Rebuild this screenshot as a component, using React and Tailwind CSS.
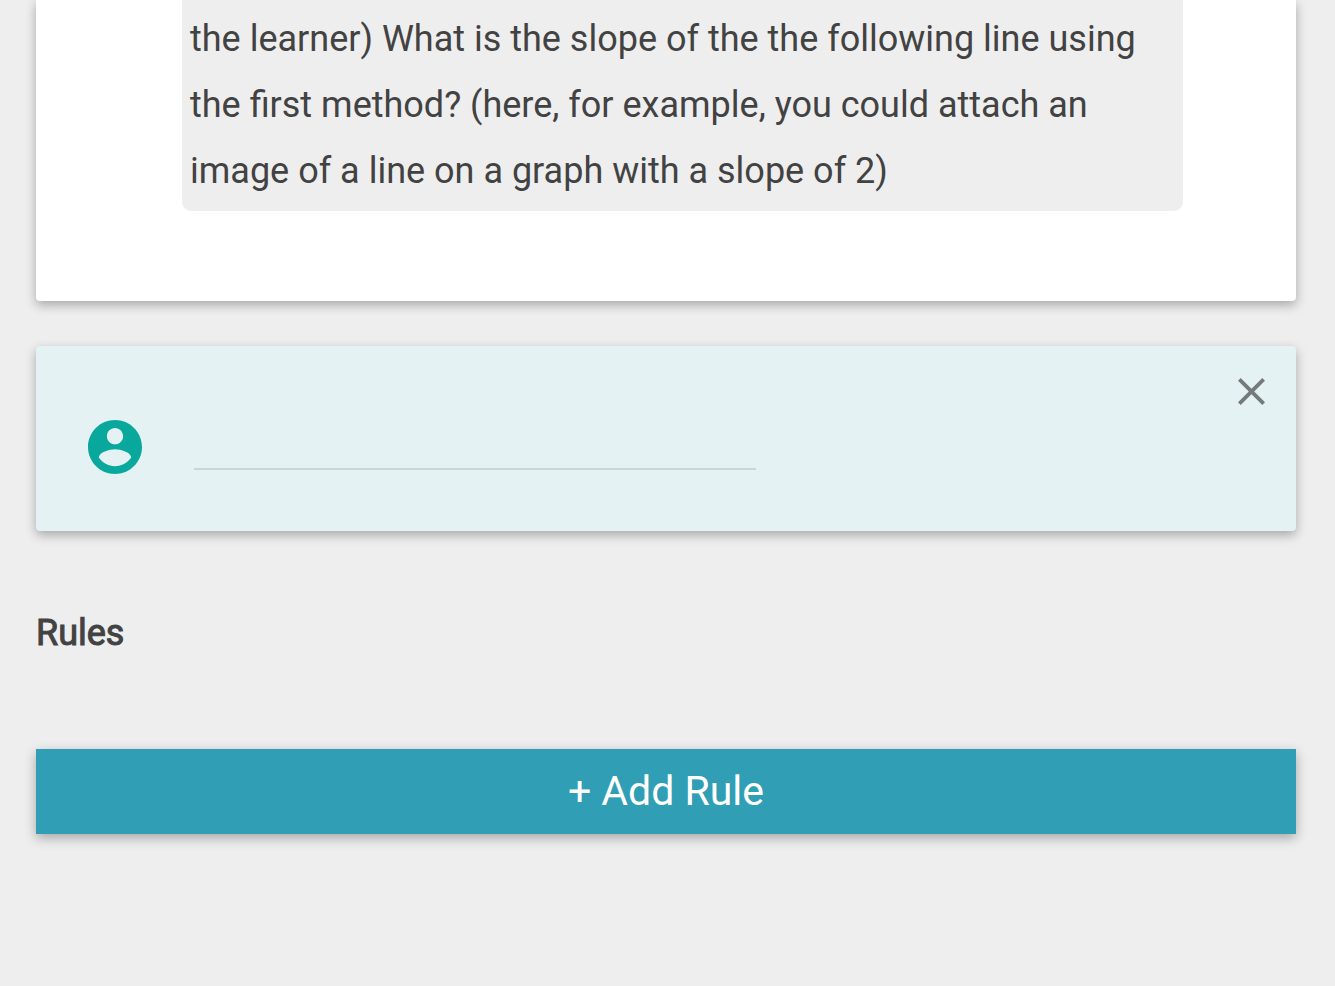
const cardShadow = 'shadow-[0_4px_11px_rgba(0,0,0,0.3)]';

function UserIcon() {
  return (
    <svg viewBox="2 2 20 20" className="size-[54px] shrink-0 fill-[#09a89c]" aria-hidden="true">
      <path d="M12 2C6.48 2 2 6.48 2 12s4.48 10 10 10 10-4.48 10-10S17.52 2 12 2zm0 3c1.66 0 3 1.34 3 3s-1.34 3-3 3-3-1.34-3-3 1.34-3 3-3zm0 14.1c-2.5 0-4.71-1.28-6-3.2.03-1.99 4-3.08 6-3.08 1.99 0 5.97 1.09 6 3.08-1.29 1.92-3.5 3.2-6 3.2z" />
    </svg>
  );
}

function CloseIcon() {
  return (
    <svg viewBox="5 5 14 14" className="size-[27px] fill-[#757b7b]" aria-hidden="true">
      <path d="M19 6.41L17.59 5 12 10.59 6.41 5 5 6.41 10.59 12 5 17.59 6.41 19 12 13.41 17.59 19 19 17.59 13.41 12z" />
    </svg>
  );
}

export default function App() {
  return (
    <main className="min-h-screen bg-[#eeeeee] pr-[39px] pb-20 pl-9 font-['Roboto',sans-serif] text-[#424242]">
      <section className={`rounded-b bg-white pr-[113px] pb-[90px] pl-[146px] ${cardShadow}`}>
        <p className="rounded-b-[9px] bg-[#eeeeee] px-2 pt-1.5 pb-[7px] text-[36px] leading-[66px]">
          the learner) What is the slope of the the following line using the first method? (here, for
          example, you could attach an image of a line on a graph with a slope of 2)
        </p>
      </section>

      <section className={`mt-[45px] flex items-start rounded bg-[#e4f2f3] pb-[57px] ${cardShadow}`}>
        <div className="flex flex-1 items-end pt-[74px] pl-[52px]">
          <UserIcon />
          <input
            type="text"
            aria-label="Learner answer"
            className="mb-1 ml-[52px] h-12 w-[562px] border-b-2 border-[#c8d6d7] bg-transparent text-[36px] outline-none"
          />
        </div>
        <button type="button" aria-label="Close" className="mt-6 mr-[23px] p-2">
          <CloseIcon />
        </button>
      </section>

      <h2 className="mt-[78px] text-[36px] leading-[48px] font-normal [-webkit-text-stroke:1px_#424242]">
        Rules
      </h2>

      <button
        type="button"
        className={`mt-[92px] block h-[85px] w-full bg-[#309eb4] text-[41px] text-white ${cardShadow}`}
      >
        + Add Rule
      </button>
    </main>
  );
}
